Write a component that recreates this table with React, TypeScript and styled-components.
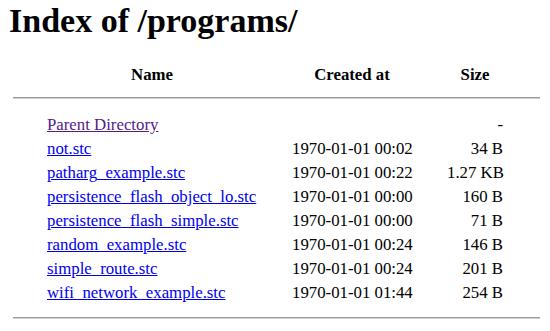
import * as React from 'react';
import styled, { createGlobalStyle } from 'styled-components';

const GlobalStyle = createGlobalStyle`
  html, body {
    margin: 0;
    padding: 0;
    background: #ffffff;
  }
  body {
    font-family: "Liberation Serif", "Times New Roman", serif;
    color: #000000;
  }
`;

const Page = styled.div`
  width: 550px;
  height: 331px;
  overflow: hidden;
  padding: 0 10px 0 13px;
  box-sizing: border-box;
`;

const Title = styled.h1`
  margin: 2px 0 0 -4px;
  font-size: 34px;
  font-weight: bold;
  line-height: 38px;
`;

const Listing = styled.div`
  width: 527px;
  margin-top: 23px;
`;

const Row = styled.div<{ $head?: boolean }>`
  display: grid;
  grid-template-columns: 210px 120px 56px;
  column-gap: 35px;
  padding-left: 34px;
  height: 24px;
  align-items: center;
  font-size: 16.8px;
  font-weight: ${(p) => (p.$head ? 'bold' : 'normal')};
`;

const HeadCell = styled.div`
  text-align: center;
`;

const Cell = styled.div<{ $right?: boolean }>`
  text-align: ${(p) => (p.$right ? 'right' : 'left')};
  white-space: nowrap;
`;

const Rule = styled.div<{ $before: number; $after: number }>`
  height: 0;
  border-top: 1px solid #9a9a9a;
  border-bottom: 1px solid #d0d0d0;
  margin: ${(p) => p.$before}px 0 ${(p) => p.$after}px;
`;

const FileLink = styled.a<{ $visited?: boolean }>`
  color: ${(p) => (p.$visited ? '#551a8b' : '#0000ee')};
  text-decoration: underline;
`;

const files = [
  { name: 'not.stc', created: '1970-01-01 00:02', size: '34 B' },
  { name: 'patharg_example.stc', created: '1970-01-01 00:22', size: '1.27 KB' },
  { name: 'persistence_flash_object_lo.stc', created: '1970-01-01 00:00', size: '160 B' },
  { name: 'persistence_flash_simple.stc', created: '1970-01-01 00:00', size: '71 B' },
  { name: 'random_example.stc', created: '1970-01-01 00:24', size: '146 B' },
  { name: 'simple_route.stc', created: '1970-01-01 00:24', size: '201 B' },
  { name: 'wifi_network_example.stc', created: '1970-01-01 01:44', size: '254 B' },
];

export default function App() {
  return (
    <Page>
      <GlobalStyle />
      <Title>Index of /programs/</Title>
      <Listing>
        <Row $head>
          <HeadCell>Name</HeadCell>
          <HeadCell>Created at</HeadCell>
          <HeadCell>Size</HeadCell>
        </Row>
        <Rule $before={10} $after={14} />
        <Row>
          <Cell>
            <FileLink href="#" $visited>Parent Directory</FileLink>
          </Cell>
          <Cell />
          <Cell $right>-</Cell>
        </Row>
        {files.map((f) => (
          <Row key={f.name}>
            <Cell>
              <FileLink href="#">{f.name}</FileLink>
            </Cell>
            <Cell>{f.created}</Cell>
            <Cell $right>{f.size}</Cell>
          </Row>
        ))}
        <Rule $before={12} $after={0} />
      </Listing>
    </Page>
  );
}
